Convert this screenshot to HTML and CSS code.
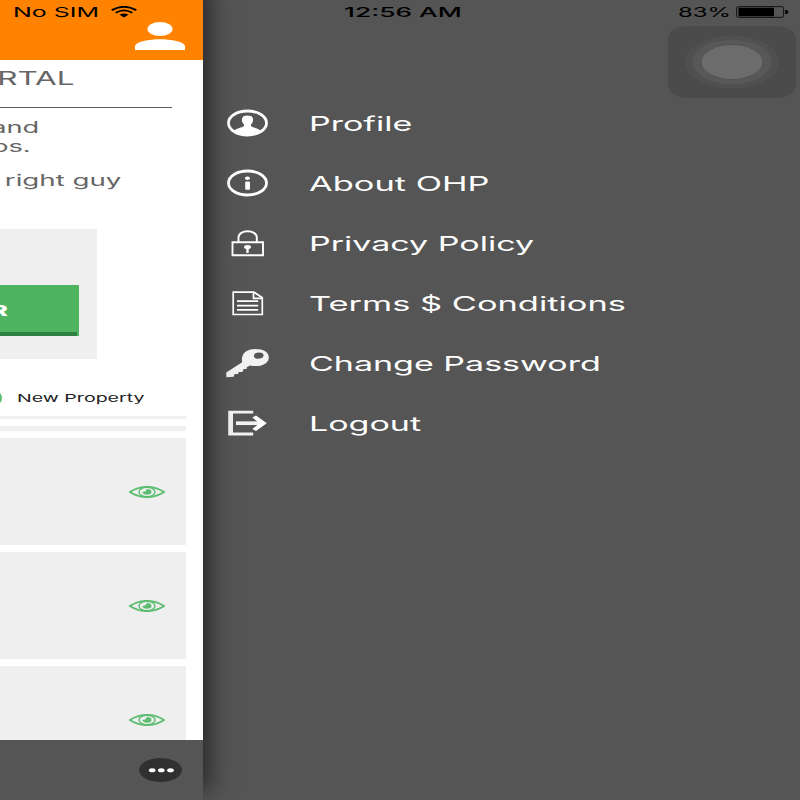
FILE: index.html
```html
<!DOCTYPE html>
<html lang="en">
<head>
<meta charset="utf-8">
<title>OHP</title>
<link rel="stylesheet" href="styles.css">
</head>
<body>
<div class="screen">
  <section class="page">
    <header class="topbar">
      <div class="carrier"><span class="t carrier-name">No SIM</span>
        <svg class="wifi" width="26" height="12" viewBox="0 0 26 12"><g fill="none" stroke="#000" stroke-width="1.9"><path d="M.7 4.2Q13-2.6 25.3 4.2"/><path d="M4.700 6.800Q13 2 21.300 6.800"/></g><path d="M8.600 8.700Q13 6.200 17.400 8.700L13 11.500Z"/></svg>
      </div>
      <svg class="user" width="50" height="28" viewBox="0 0 50 28" fill="#fff"><ellipse cx="25" cy="7" rx="12.5" ry="7"/><path d="M0 28V24.500C0 19.500 15 17.300 25 17.300S50 19.500 50 24.500V28Z"/></svg>
    </header>
    <main class="content">
      <h1 class="title"><span class="t">RTAL</span></h1>
      <p class="line line-a"><span class="t">and</span></p>
      <p class="line line-b"><span class="t">os.</span></p>
      <p class="line line-c"><span class="t">right guy</span></p>
      <div class="promo"><div class="button"><span class="t">R</span></div></div>
      <div class="legend"><i class="dot"></i><span class="t">New Property</span></div>
      <div class="rule thin"></div>
      <div class="rule thick"></div>
      <div class="card"><svg class="eye" width="36" height="12" viewBox="0 0 36 12"><g fill="none" stroke="#5cbd70" stroke-width="1.700"><path d="M.8 6Q9 .8 18 .8T35.200 6Q27 11.200 18 11.200T.8 6Z"/><ellipse cx="18" cy="6" rx="8" ry="4.700" stroke-width="1.400"/></g><path fill="#5cbd70" d="M18 3.100C21 3.100 22.500 4.300 22.500 6S21 8.800 18 8.800 13.500 7.600 13.500 6L16.600 5.200Z"/></svg></div>
      <div class="card"><svg class="eye" width="36" height="12" viewBox="0 0 36 12"><g fill="none" stroke="#5cbd70" stroke-width="1.700"><path d="M.8 6Q9 .8 18 .8T35.200 6Q27 11.200 18 11.200T.8 6Z"/><ellipse cx="18" cy="6" rx="8" ry="4.700" stroke-width="1.400"/></g><path fill="#5cbd70" d="M18 3.100C21 3.100 22.500 4.300 22.500 6S21 8.800 18 8.800 13.500 7.600 13.500 6L16.600 5.200Z"/></svg></div>
      <div class="card"><svg class="eye" width="36" height="12" viewBox="0 0 36 12"><g fill="none" stroke="#5cbd70" stroke-width="1.700"><path d="M.8 6Q9 .8 18 .8T35.200 6Q27 11.200 18 11.200T.8 6Z"/><ellipse cx="18" cy="6" rx="8" ry="4.700" stroke-width="1.400"/></g><path fill="#5cbd70" d="M18 3.100C21 3.100 22.500 4.300 22.500 6S21 8.800 18 8.800 13.500 7.600 13.500 6L16.600 5.200Z"/></svg></div>
    </main>
    <footer class="bottombar">
      <svg width="43" height="24" viewBox="0 0 43 24"><ellipse cx="21.500" cy="12" rx="21.500" ry="12" fill="#303030"/><g fill="#fff"><ellipse cx="13.200" cy="12.300" rx="3.300" ry="2"/><ellipse cx="22.300" cy="12.300" rx="3.300" ry="2"/><ellipse cx="31.500" cy="12.300" rx="3.300" ry="2"/></g></svg>
    </footer>
  </section>
  <aside class="drawer">
    <div class="status">
      <span class="t time">12:56 AM</span>
      <div class="power"><span class="t percent">83%</span>
        <svg width="53" height="12" viewBox="0 0 53 12"><rect x=".6" y=".6" width="47" height="10.800" rx="2" fill="none" stroke="#111" stroke-width="1"/><path d="M2.500 1.800H38V10.200H2.500Z"/><path d="M49.200 4H50.500Q52.300 4.500 52.300 6T50.500 8H49.200Z"/></svg>
      </div>
    </div>
    <nav class="menu">
      <a class="item"><svg class="icon" width="44" height="32" viewBox="0 0 44 32"><ellipse cx="21.500" cy="16" rx="19" ry="12" fill="none" stroke="#fff" stroke-width="2.800"/><path fill="#fff" d="M8 24.500C9.500 21.500 14 21 17 19.800C18.500 19 18.400 17.800 17.500 17C16.200 15.500 15.800 13.500 16 12C16.200 9.500 18.200 8.400 21.500 8.400S26.800 9.500 27 12C27.200 13.500 26.800 15.500 25.500 17C24.600 17.800 24.500 19 26 19.800C29 21 33.500 21.500 35 24.500Q29 28 21.500 28T8 24.500Z"/></svg><span class="t">Profile</span></a>
      <a class="item"><svg class="icon" width="44" height="32" viewBox="0 0 44 32"><ellipse cx="21.500" cy="16" rx="19" ry="12" fill="none" stroke="#fff" stroke-width="2.800"/><ellipse cx="21.500" cy="11.300" rx="2.600" ry="1.700" fill="#fff"/><rect x="19.200" y="14.500" width="4.800" height="8.300" rx="1" fill="#fff"/></svg><span class="t wide">About OHP</span></a>
      <a class="item"><svg class="icon" width="44" height="32" viewBox="0 0 44 32"><g fill="none" stroke="#fff" stroke-width="1.900"><path d="M6.500 15.300H37V28.200H6.500Z"/><path d="M12.500 15V10.500C12.500 2.200 30.800 2.200 30.800 10.500V15"/></g><ellipse cx="21.500" cy="20" rx="3.500" ry="2" fill="#fff"/><path fill="#fff" d="M20.300 20H22.700V26H20.300Z"/></svg><span class="t">Privacy Policy</span></a>
      <a class="item"><svg class="icon" width="44" height="32" viewBox="0 0 44 32"><g fill="none" stroke="#fff" stroke-width="1.700"><path d="M7.200 5.200H28L36.300 10.800V27.500H7.200Z"/><path d="M27.500 5.200V11.300H36.300M11 14.200H32.200M11 18.700H32.200M11 22.800H32.200"/></g></svg><span class="t wide">Terms $ Conditions</span></a>
      <a class="item"><svg class="icon" width="44" height="32" viewBox="0 0 44 32"><path fill="#f2f2f2" fill-rule="evenodd" d="M.2 25.500L16.200 15.200C14.500 7.500 20 2.100 29 2.100C38 2.100 43.200 5.500 42.800 11.200C42.200 17.500 33 20.500 24 18.500L20.600 20.300V22H17.600L16.500 25H12.800L12 27H8.500L7.800 29.800L.4 30.200ZM33 5.600C29 5.600 27.600 7.600 28 9.400C28.500 11.400 31 12 33.500 11.600C36.500 11.200 38 9.500 37.500 7.700C37 6.200 35.500 5.500 33 5.600Z"/></svg><span class="t">Change Password</span></a>
      <a class="item"><svg class="icon" width="44" height="32" viewBox="0 0 44 32"><path fill="#f2f2f2" d="M2.200 3.800H27.200V6.600H7V25.600H27.200V28.600H2.200Z"/><path fill="none" stroke="#f2f2f2" stroke-width="3.700" d="M10 16.200H36"/><path fill="#fff" d="M26.300 10.600L30 8.500L40.800 16.200L30 24L26.300 22L33.500 16.200Z"/></svg><span class="t">Logout</span></a>
    </nav>
  </aside>
  <svg class="assist" width="128" height="72" viewBox="0 0 128 72"><rect width="128" height="72" rx="20" ry="13" fill="#4b4b4b"/><ellipse cx="64" cy="36" rx="47" ry="26.500" fill="#505050"/><ellipse cx="64" cy="36" rx="39.500" ry="22.200" fill="#585858"/><ellipse cx="64" cy="36" rx="31" ry="17.500" fill="#6c6c6c" stroke="#4e4e4e" stroke-width=".8"/></svg>
</div>
</body>
</html>
```
FILE: styles.css
```css
* { box-sizing: border-box; }
body { margin: 0; font-family: Inter, "Liberation Sans", sans-serif; }
h1, p { margin: 0; font-weight: 400; }
svg { display: block; flex: none; }
.screen { position: relative; display: flex; width: 800px; height: 800px; overflow: hidden; background: #555; }
.t { display: inline-block; white-space: pre; transform: scaleX(1.7); transform-origin: left center; }

.page { display: flex; flex-direction: column; width: 203px; height: 800px; flex: none; background: #fff; box-shadow: 5px -12px 22px 3px rgba(0, 0, 0, .5); z-index: 1; }
.topbar { height: 60px; background: #ff8300; }
.carrier { display: flex; height: 22px; padding: 6px 0 0 13px; font-size: 13.500px; line-height: 13px; }
.carrier-name { width: 98px; transform: scaleX(1.85); }
.user { margin-left: 135px; }
.content { height: 680px; overflow: hidden; color: #666; }
.content .t { transform-origin: right center; }
.title { width: 172px; height: 48px; padding-right: 97px; border-bottom: 1px solid #5c5c5c; font-size: 18.500px; line-height: 37px; text-align: right; }
.line { font-size: 16px; line-height: 20px; text-align: right; }
.line-a { width: 39px; margin-top: 9px; }
.line-b { width: 31px; margin-top: -1px; }
.line-c { width: 121px; margin-top: 14px; }
.line-c .t { transform: scaleX(1.73); }
.promo { width: 97px; height: 130px; margin-top: 39px; padding-top: 56px; background: #efefef; }
.button { width: 79px; height: 51px; padding-right: 71px; background: linear-gradient(#2f8042, #2f8042) left bottom / 77px 4px no-repeat #4fb460; color: #fff; font-size: 15px; font-weight: 800; line-height: 52px; text-align: right; }
.button .t { margin-left: -20px; }
.legend { display: flex; align-items: center; height: 18px; margin-top: 30px; color: #222; font-size: 11px; line-height: 18px; }
.legend .t { transform: scaleX(1.78); transform-origin: left center; margin-left: 15px; }
.dot { width: 14px; height: 14px; margin-left: -12px; border-radius: 50%; background: #5cbd70; }
.rule { width: 186px; background: #f0f0f0; }
.thin { height: 3px; margin-top: 9px; }
.thick { height: 5px; margin: 7px 0 7px; }
.card { display: flex; width: 186px; height: 107px; margin-bottom: 7px; padding: 48px 0 0 129px; background: #efefef; }
.bottombar { height: 60px; padding: 18px 0 0 139px; background: #555; }

.drawer { width: 597px; }
.status { display: flex; height: 22px; padding: 6px 11px 0 141px; justify-content: space-between; color: #000; font-size: 13.500px; line-height: 13px; }
.time { font-weight: 500; transform: scaleX(1.95); }
.power { display: flex; width: 111px; }
.percent { width: 58px; transform: scaleX(1.77); }
.menu { margin-top: 72px; }
.item { display: flex; align-items: center; height: 60px; padding-left: 23px; color: #fff; font-size: 20px; line-height: 28px; }
.item .icon { margin-right: 38.500px; margin-top: -2px; }
.item .wide { transform: scaleX(1.72); }
.assist { position: absolute; left: 668px; top: 26px; }
```
